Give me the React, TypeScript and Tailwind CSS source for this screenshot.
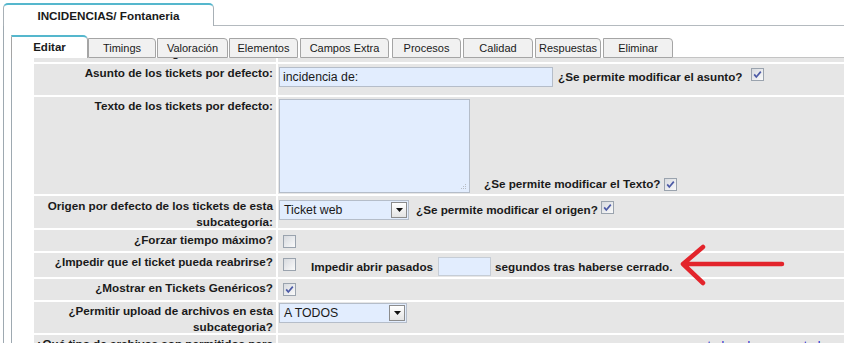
import React from 'react';

const Check: React.FC<{ checked?: boolean; className?: string }> = ({ checked, className = '' }) => (
  <svg width="13" height="13" viewBox="0 0 13 13" className={`shrink-0 ${className}`}>
    <defs>
      <linearGradient id="cbg" x1="0" y1="0" x2="1" y2="1">
        <stop offset="0" stopColor="#d6d9de" />
        <stop offset="1" stopColor="#fbfbfb" />
      </linearGradient>
    </defs>
    <rect x="0.5" y="0.5" width="12" height="12" fill="url(#cbg)" stroke="#9aa3ae" />
    {checked && <path d="M3.2 6.4 L5.3 9 L9.8 3.6" fill="none" stroke="#4c5aa6" strokeWidth="1.7" />}
  </svg>
);

const Select: React.FC<{ value: string; w: string }> = ({ value, w }) => (
  <div className={`${w} h-[20px] bg-[#e2edfe] border border-[#b5bdc9] flex items-center justify-between pl-[4px] pr-px text-[12.3px]`}>
    <span>{value}</span>
    <span className="w-[16px] h-[16px] border border-[#8c8c8c] bg-gradient-to-b from-white to-[#e4e4e4] flex items-center justify-center">
      <svg width="7" height="4" viewBox="0 0 7 4"><path d="M0 0 H7 L3.5 4 Z" fill="#111" /></svg>
    </span>
  </div>
);

const tabs: { name: string; cls: string }[] = [
  { name: 'Timings', cls: 'w-[68px]' },
  { name: 'Valoración', cls: 'ml-[1px] w-[71px]' },
  { name: 'Elementos', cls: 'ml-[1px] w-[69px]' },
  { name: 'Campos Extra', cls: 'ml-[2px] w-[89px]' },
  { name: 'Procesos', cls: 'ml-[3px] w-[69px]' },
  { name: 'Calidad', cls: 'ml-[2px] w-[70px]' },
  { name: 'Respuestas', cls: 'ml-[2px] w-[66px]' },
  { name: 'Eliminar', cls: 'ml-[2px] w-[70px]' },
];

const label = 'w-[242px] shrink-0 bg-[#e6e6e6] text-right pr-[3px] text-[11.7px] font-bold leading-[16px]';
const value = 'flex-1 bg-[#e6e6e6] text-[12.3px]';
const bold = 'font-bold text-[11.7px] leading-[16px]';

const App: React.FC = () => {
  return (
    <div className="w-[844px] h-[343px] overflow-hidden bg-white relative font-['Liberation_Sans',Arial,sans-serif] text-[#1a1a1a]">
      {/* outer tab */}
      <div className="flex items-end h-[26px] pt-[3px] pl-[3px]">
        <div className="w-[211px] h-[23px] border border-b-0 border-[#a8b0b6] border-t-2 border-t-[#55b7cd] rounded-t-[5px] bg-white flex items-center justify-center text-[11.7px] font-bold">
          INCIDENCIAS/ Fontaneria
        </div>
        <div className="flex-1 border-b border-[#b4babf]" />
      </div>

      <div className="ml-[3px] border-l border-[#9ea9b1] h-[317px]">
        <div className="pt-[9px] pl-[7px]">
          {/* inner tabs */}
          <div className="flex items-end h-[23px] text-[11px]">
            <div className="w-[77px] h-[23px] border border-b-0 border-[#a5a5a5] border-t-2 border-t-[#55b7cd] rounded-tr-[5px] bg-white flex items-center justify-center font-bold text-[11.5px]">
              Editar
            </div>
            {tabs.map((t) => (
              <div
                key={t.name}
                className={`${t.cls} h-[20px] border border-[#a5a5a5] rounded-tr-[4px] bg-[#f1f1f1] flex items-center justify-center`}
              >
                {t.name}
              </div>
            ))}
            <div className="flex-1 border-b border-[#c4c4c4]" />
          </div>

          {/* content */}
          <div className="border-l border-[#9ea9b1] pl-[22px] h-[286px] overflow-hidden flex flex-col gap-[2px]">
            <div className="flex gap-[2px] h-[4px] shrink-0">
              <div className={`${label} overflow-hidden`}>
                <div className="-mt-[13px] pr-[40px]">Código interno:</div>
              </div>
              <div className={value} />
            </div>

            <div className="flex gap-[2px] h-[31px] shrink-0">
              <div className={`${label} pt-px`}>Asunto de los tickets por defecto:</div>
              <div className={`${value} flex items-start pt-[3px] pl-px`}>
                <div className="w-[274px] h-[20px] bg-[#e2edfe] border border-[#b5bdc9] pl-[3px] leading-[18px]">incidencia de:</div>
                <span className={`${bold} ml-[5px] mt-[2px]`}>¿Se permite modificar el asunto?</span>
                <Check checked className="ml-[9px] mt-[1px]" />
              </div>
            </div>

            <div className="flex gap-[2px] h-[97px] shrink-0">
              <div className={`${label} pt-px`}>Texto de los tickets por defecto:</div>
              <div className={`${value} flex items-end pb-[1px] pl-px`}>
                <div className="w-[191px] h-[94px] bg-[#e2edfe] border border-[#b5bdc9] relative">
                  <svg width="7" height="7" viewBox="0 0 7 7" className="absolute right-[2px] bottom-[2px]">
                    <rect x="5" y="1" width="1" height="1" fill="#b7bcc4" />
                    <rect x="3" y="3" width="1" height="1" fill="#b7bcc4" />
                    <rect x="5" y="3" width="1" height="1" fill="#b7bcc4" />
                    <rect x="1" y="5" width="1" height="1" fill="#b7bcc4" />
                    <rect x="3" y="5" width="1" height="1" fill="#b7bcc4" />
                    <rect x="5" y="5" width="1" height="1" fill="#b7bcc4" />
                  </svg>
                </div>
                <span className={`${bold} ml-[14px] mb-[1px]`}>¿Se permite modificar el Texto?</span>
                <Check checked className="ml-[4px] mb-[2px]" />
              </div>
            </div>

            <div className="flex gap-[2px] h-[32px] shrink-0">
              <div className={`${label} pt-[2px]`}>
                Origen por defecto de los tickets de esta
                <br />
                subcategoría:
              </div>
              <div className={`${value} flex items-start pt-[4px] pl-px`}>
                <Select value="Ticket web" w="w-[130px]" />
                <span className={`${bold} ml-[7px] mt-[2px]`}>¿Se permite modificar el origen?</span>
                <Check checked className="ml-[3px] mt-px" />
              </div>
            </div>

            <div className="flex gap-[2px] h-[21px] shrink-0">
              <div className={`${label} pt-[2px]`}>¿Forzar tiempo máximo?</div>
              <div className={`${value} flex items-start pt-[5px] pl-[5px]`}>
                <Check />
              </div>
            </div>

            <div className="flex gap-[2px] h-[24px] shrink-0">
              <div className={`${label} pt-px`}>¿Impedir que el ticket pueda reabrirse?</div>
              <div className={`${value} flex items-start pt-[4px] pl-[5px]`}>
                <Check className="mt-px" />
                <span className={`${bold} ml-[15px] mt-[2px]`}>Impedir abrir pasados</span>
                <div className="ml-[5px] w-[53px] h-[19px] bg-[#e2edfe] border border-[#c6cdd6]" />
                <span className={`${bold} ml-[4px] mt-[2px]`}>segundos tras haberse cerrado.</span>
              </div>
            </div>

            <div className="flex gap-[2px] h-[21px] shrink-0">
              <div className={`${label} pt-px`}>¿Mostrar en Tickets Genéricos?</div>
              <div className={`${value} flex items-start pt-[4px] pl-[5px]`}>
                <Check checked />
              </div>
            </div>

            <div className="flex gap-[2px] h-[31px] shrink-0">
              <div className={`${label} pt-px leading-[15px]`}>
                ¿Permitir upload de archivos en esta
                <br />
                subcategoria?
              </div>
              <div className={`${value} flex items-start pt-[1px] pl-px`}>
                <Select value="A TODOS" w="w-[128px]" />
              </div>
            </div>

            <div className="flex gap-[2px] h-[31px] shrink-0">
              <div className={`${label} pt-px`}>¿Qué tipo de archivos son permitidos para</div>
              <div className={`${value} flex justify-end pr-[11px] pt-[2px] text-[12px] text-[#1a1acc] underline`}>
                marcar todos, desmarcar todos
              </div>
            </div>
          </div>
        </div>
      </div>

      {/* red annotation arrow */}
      <svg width="110" height="44" viewBox="0 0 110 44" className="absolute left-[678px] top-[242px]">
        <path d="M5 22 H104 M5 22 L25 5 M5 22 L25 41" fill="none" stroke="#e3242b" strokeWidth="4.5" strokeLinecap="round" />
      </svg>
    </div>
  );
};

export default App;
